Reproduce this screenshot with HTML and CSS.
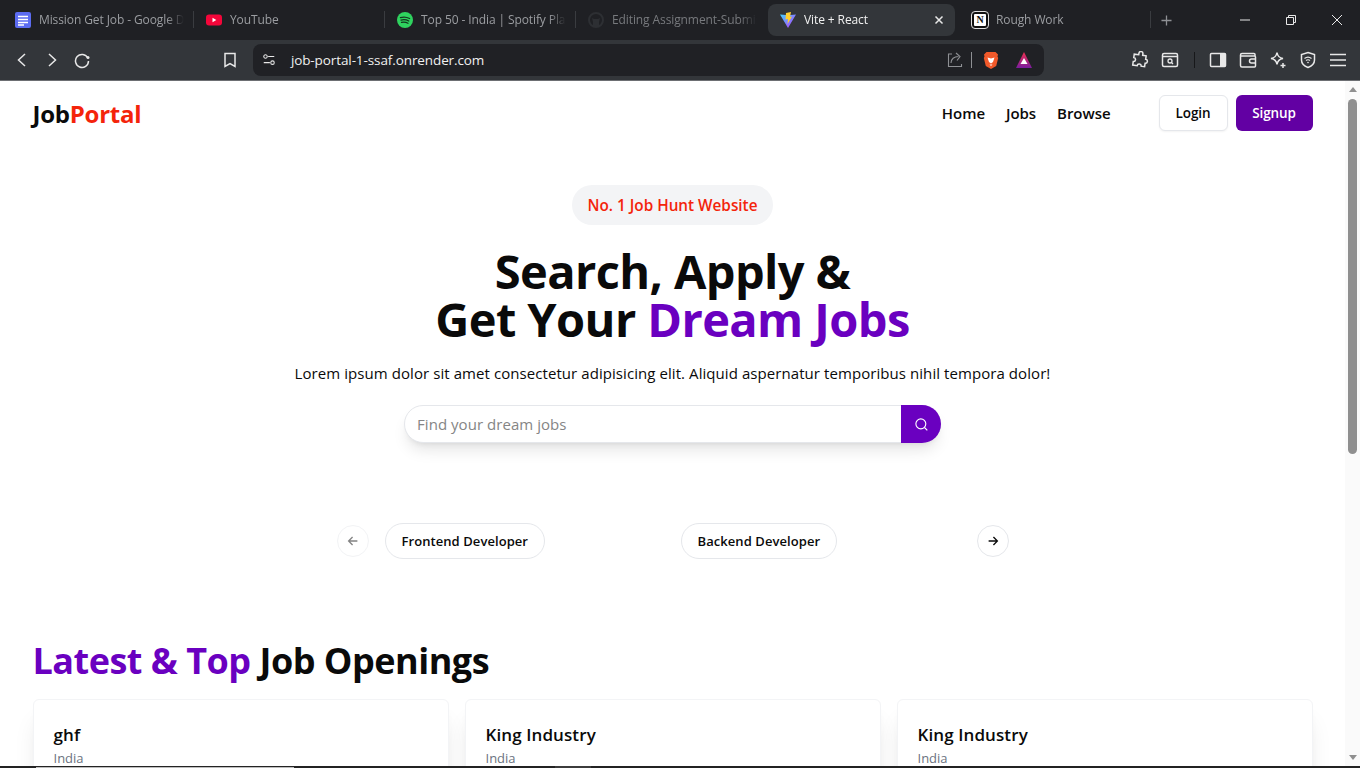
FILE: index.html
```html
<!DOCTYPE html>
<html lang="en">
<head>
<meta charset="UTF-8">
<title>Vite + React</title>
<link rel="stylesheet" href="styles.css">
</head>
<body>

<!-- browser tabs -->
<div class="tabstrip">
    <div class="tab">
        <svg class="favicon" viewBox="0 0 16 16"><rect width="16" height="16" rx="2" fill="#5c6cf2"/><path d="M3 4.500h10M3 7.500h10M3 10.500h10M3 13h6" stroke="#fff" stroke-width="1.500"/></svg>
        <span class="tab-title">Mission Get Job - Google Docs</span>
    </div>
    <div class="tab">
        <svg class="favicon" viewBox="0 0 16 16"><rect y="2.500" width="16" height="11" rx="3" fill="#f4063a"/><path d="M6.500 5.800v4.400L10.300 8z" fill="#fff"/></svg>
        <span class="tab-title">YouTube</span>
    </div>
    <div class="tab">
        <svg class="favicon" viewBox="0 0 16 16"><circle cx="8" cy="8" r="8" fill="#2fd35f"/><path d="M3.400 5.600c3-.9 6.400-.6 9.200.9M4 8.100c2.600-.7 5.400-.4 7.800.9M4.500 10.400c2.200-.5 4.500-.3 6.500.8" fill="none" stroke="#14371f" stroke-width="1.300" stroke-linecap="round"/></svg>
        <span class="tab-title">Top 50 - India | Spotify Playlist</span>
    </div>
    <div class="tab no-sep">
        <svg class="favicon" viewBox="0 0 16 16"><circle cx="8" cy="8" r="7" fill="none" stroke="#2d2f33" stroke-width="2"/><path d="M5 14V10L4 6l2 1h4l2-1-1 4v4z" fill="#2d2f33"/></svg>
        <span class="tab-title dim">Editing Assignment-Submission</span>
    </div>
    <div class="tab active">
        <svg class="favicon" viewBox="0 0 16 16"><defs><linearGradient id="viteBg" x1="0" y1="0" x2="1" y2="1"><stop offset="0" stop-color="#41d1ff"/><stop offset="1" stop-color="#bd34fe"/></linearGradient></defs><path d="M0 2.500l6 .6 2 .2 8-.8L8 16z" fill="url(#viteBg)"/><path d="M6 1l5-1-1 5 2-.5L7.500 12 8 7 5.500 7.500z" fill="#ffcf2e"/></svg>
        <span class="tab-title">Vite + React</span>
        <svg class="tab-close" viewBox="0 0 10 10"><path d="M1.500 1.500l7 7M8.500 1.500l-7 7" stroke="#e8e8e8" stroke-width="1.500"/></svg>
    </div>
    <div class="tab">
        <span class="notion-icon">N</span>
        <span class="tab-title">Rough Work</span>
    </div>
    <svg class="new-tab" viewBox="0 0 12 12"><path d="M6 .5v11M.5 6h11" stroke="#8f9195" stroke-width="1.400"/></svg>
    <div class="window-controls">
        <svg viewBox="0 0 12 12"><path d="M1 6h10" stroke="#e8e8e8"/></svg>
        <svg viewBox="0 0 12 12"><path d="M1.500 3.500h7v7h-7zM3.500 3.500v-2h7v7h-2" fill="none" stroke="#e8e8e8"/></svg>
        <svg viewBox="0 0 12 12"><path d="M1 1l10 10M11 1L1 11" stroke="#e8e8e8"/></svg>
    </div>
</div>

<!-- address bar row -->
<div class="toolbar">
    <div class="tool"><svg viewBox="0 0 18 18"><path d="M12 3L5.500 9l6.500 6" /></svg></div>
    <div class="tool"><svg viewBox="0 0 18 18"><path d="M6 3l6.500 6L6 15" /></svg></div>
    <div class="tool"><svg viewBox="0 0 18 18"><path d="M14.800 7A6.500 6.500 0 1 0 15.500 10" /><circle cx="15" cy="6.500" r="1.500" fill="#e8e8e8" stroke="none"/></svg></div>
    <div class="tool bookmark"><svg viewBox="0 0 18 18"><path d="M4 2.500h10v13L9 12.500l-5 3z" /></svg></div>
    <div class="urlbar">
        <svg class="url-tune" viewBox="0 0 16 16"><circle cx="4" cy="4" r="2"/><path d="M7 4h7M2 11h7"/><circle cx="12" cy="11" r="2"/></svg>
        <span class="url-text">job-portal-1-ssaf.onrender.com</span>
        <svg class="url-share" viewBox="0 0 18 18"><path d="M6 3H2.500v12.500h13V13M5 12c0-4 3-6.500 7.500-6.500M10 2l4 3.500-3 4" /></svg>
        <span class="url-sep"></span>
        <svg class="url-brave" viewBox="0 0 16 18"><path d="M3.500 1h9L15 3.500l-.5 2 .7 1.500-2 8L8 18l-5.200-3-2-8 .7-1.500L1 3.500z" fill="#f1592a"/><path d="M4.500 6.500L8 7.500l3.500-1L10 11l-2 1.500L6 11z" fill="#fff"/><path d="M6.500 13.500h3L8 15z" fill="#fff"/></svg>
        <svg class="url-rewards" viewBox="0 0 16 16"><defs><linearGradient id="batBg" x1="0" y1="0" x2="0" y2="1"><stop offset="0" stop-color="#f0304f"/><stop offset="1" stop-color="#7a1c9e"/></linearGradient></defs><path d="M8 0l8 16H0z" fill="url(#batBg)"/><path d="M8 6l3.500 6h-7z" fill="#fff"/></svg>
    </div>
    <div class="tool-group">
        <div class="tool"><svg viewBox="0 0 18 18"><path d="M7 2.500a2 2 0 0 1 4 0v1.500h3.500v3.500a2 2 0 0 1 0 4v3.500H11a2 2 0 0 0-4 0H2.500V11.500a2 2 0 0 0 0-4V4H7z" transform="rotate(8 9 9)"/></svg></div>
        <div class="tool"><svg viewBox="0 0 18 18"><rect x="1.500" y="2.500" width="15" height="13" rx="1.500"/><path d="M1.500 5.500h15"/><circle cx="9" cy="10" r="2" stroke-width="1.300"/><path d="M10.500 11.500l1.500 1.500" stroke-width="1.300"/></svg></div>
        <span class="tool-sep"></span>
        <div class="tool"><svg viewBox="0 0 18 18"><rect x="1.500" y="2.500" width="15" height="13" rx="1"/><rect x="11" y="2.500" width="5.500" height="13" fill="#e8e8e8" stroke="none"/></svg></div>
        <div class="tool"><svg viewBox="0 0 18 18"><path d="M16 5V3.500a1 1 0 0 0-1-1H3a1.500 1.500 0 0 0-1.500 1.500v10.500a1.500 1.500 0 0 0 1.500 1.500h12.500a1 1 0 0 0 1-1V6a1 1 0 0 0-1-1H2"/><path d="M16.500 8h-4a2 2 0 0 0 0 4h4"/></svg></div>
        <div class="tool"><svg viewBox="0 0 18 18"><path d="M8 1.500c.6 3.800 2.200 5.400 6 6-3.800.6-5.400 2.200-6 6-.6-3.800-2.200-5.400-6-6 3.800-.6 5.400-2.200 6-6zM14 12v5M11.500 14.500h5"/></svg></div>
        <div class="tool"><svg viewBox="0 0 18 18"><path d="M9 1.500l6.500 2v5.500c0 3.500-2.700 6-6.500 7.500-3.800-1.500-6.500-4-6.500-7.500V3.500z"/><path d="M5.500 7.500c2-1.600 5-1.600 7 0M7 9.500c1.200-.9 2.800-.9 4 0" stroke-width="1.200"/><circle cx="9" cy="11.500" r=".8" fill="#e8e8e8" stroke="none"/></svg></div>
        <div class="tool"><svg viewBox="0 0 18 18"><path d="M1 3.500h16M1 9h16M1 14.500h16"/></svg></div>
    </div>
</div>

<div class="viewport">
    <div class="page">
        <nav class="navbar">
            <h2 class="logo">Job<span class="red">Portal</span></h2>
            <div class="nav-right">
                <ul class="nav-links">
                    <li>Home</li>
                    <li>Jobs</li>
                    <li>Browse</li>
                </ul>
                <div class="nav-buttons">
                    <button class="btn btn-outline">Login</button>
                    <button class="btn btn-purple">Signup</button>
                </div>
            </div>
        </nav>

        <section class="hero">
            <span class="badge">No. 1 Job Hunt Website</span>
            <h1>Search, Apply &amp;<br>Get Your <span class="purple">Dream Jobs</span></h1>
            <p>Lorem ipsum dolor sit amet consectetur adipisicing elit. Aliquid aspernatur temporibus nihil tempora dolor!</p>
            <div class="search">
                <input placeholder="Find your dream jobs">
                <button class="search-btn">
                    <svg viewBox="0 0 16 16"><circle cx="7.300" cy="7.300" r="5.300"/><path d="M11.200 11.200l3 3"/></svg>
                </button>
            </div>
        </section>

        <section class="carousel">
            <button class="arrow arrow-off"><svg viewBox="0 0 16 16"><path d="M13 8H3M7.500 3.500L3 8l4.500 4.500"/></svg></button>
            <div class="carousel-items">
                <div class="chip-slot"><button class="chip">Frontend Developer</button></div>
                <div class="chip-slot"><button class="chip">Backend Developer</button></div>
            </div>
            <button class="arrow"><svg viewBox="0 0 16 16"><path d="M3 8h10M8.500 3.500L13 8l-4.500 4.500"/></svg></button>
        </section>

        <section class="latest">
            <h2><span class="purple">Latest &amp; Top</span> Job Openings</h2>
            <div class="job-grid">
                <div class="job-card">
                    <h3>ghf</h3>
                    <p>India</p>
                </div>
                <div class="job-card">
                    <h3>King Industry</h3>
                    <p>India</p>
                </div>
                <div class="job-card">
                    <h3>King Industry</h3>
                    <p>India</p>
                </div>
            </div>
        </section>
    </div>

    <div class="scrollbar">
        <span class="scroll-up"></span>
        <span class="scroll-thumb"></span>
        <span class="scroll-down"></span>
    </div>
</div>

<!-- sliver of the taskbar -->
<div class="taskbar">
    <span class="task-search"></span>
    <span class="task-item"></span>
</div>

</body>
</html>
```

FILE: styles.css
```css
* { box-sizing: border-box; }

html, body {
    margin: 0;
    height: 768px;
    overflow: hidden;
}
body {
    font-family: "Open Sans", "Noto Sans", sans-serif;
    background: #fff;
    color: #0a0a0a;
    display: flex;
    flex-direction: column;
}

/* browser tabs */
.tabstrip {
    height: 40px;
    background: #1f2024;
    display: flex;
    align-items: center;
    padding-left: 1px;
    flex-shrink: 0;
}
.tab {
    width: 191px;
    height: 32px;
    padding: 0 8px 0 14px;
    display: flex;
    align-items: center;
    gap: 8px;
    position: relative;
    font-size: 12px;
    letter-spacing: -0.1px;
    color: #9b9da1;
}
.tab::after {
    content: "";
    position: absolute;
    right: -2px;
    top: 7px;
    height: 17px;
    width: 1px;
    background: #3a3c40;
}
.tab.no-sep::after, .tab.active::after { display: none; }
.tab.active {
    width: 187px;
    margin: 0 3px 0 3px;
    padding: 0 11px 0 12px;
    background: #33363a;
    border-radius: 8px;
    color: #f1f1f1;
}
.favicon { width: 16px; height: 16px; flex-shrink: 0; }
.tab-title {
    flex: 1;
    padding-bottom: 2px;
    white-space: nowrap;
    overflow: hidden;
    -webkit-mask-image: linear-gradient(to right, #000 88%, transparent);
    mask-image: linear-gradient(to right, #000 88%, transparent);
}
.tab-title.dim { color: #77797d; }
.tab-close { width: 10px; height: 10px; flex-shrink: 0; }
.notion-icon {
    width: 16px;
    height: 16px;
    flex-shrink: 0;
    background: #fff;
    border: 2px solid #111;
    outline: 1px solid #ddd;
    border-radius: 3px;
    color: #111;
    font: bold 10px/12px "Liberation Serif", serif;
    text-align: center;
}
.new-tab { width: 11px; height: 11px; margin-left: 12px; }
.window-controls {
    margin-left: auto;
    display: flex;
    gap: 34px;
    padding-right: 17px;
}
.window-controls svg { width: 12px; height: 12px; display: block; }

/* address bar row */
.toolbar {
    height: 41px;
    background: #33363a;
    border-bottom: 1px solid #6d6f73;
    display: flex;
    align-items: center;
    padding: 0 7px 1px;
    flex-shrink: 0;
}
.tool {
    width: 30px;
    height: 30px;
    display: flex;
    align-items: center;
    justify-content: center;
}
.tool svg { width: 18px; height: 18px; }
.tool svg, .url-tune, .url-share {
    fill: none;
    stroke: #e8e8e8;
    stroke-width: 1.500;
}
.bookmark { margin-left: 118px; }
.urlbar {
    width: 792px;
    height: 32px;
    margin-left: 8px;
    background: #202125;
    border-radius: 8px;
    display: flex;
    align-items: center;
    padding-left: 9px;
}
.url-tune { width: 14px; height: 14px; stroke-width: 1.200; }
.url-text {
    margin-left: 15px;
    font-size: 13.500px;
    letter-spacing: -0.1px;
    color: #f0f0f0;
}
.url-share {
    width: 18px;
    height: 18px;
    margin-left: auto;
    stroke: #8e9094;
    stroke-width: 1.100;
}
.url-sep { width: 1px; height: 16px; background: #8e9094; margin: 0 11px 0 7px; }
.url-brave { width: 16px; height: 18px; }
.url-rewards { width: 16px; height: 16px; margin: 0 12px 0 17px; }
.tool-group {
    display: flex;
    align-items: center;
    margin-left: 81px;
}
.tool-sep { width: 1px; height: 16px; background: #17181a; margin: 0 8px 0 9px; }

/* page area */
.viewport {
    flex: 1;
    min-height: 0;
    display: flex;
}
.page {
    flex: 1;
    min-width: 0;
    overflow: hidden;
}
.red { color: #f4240b; }
.purple { color: #6a00c0; }

.navbar {
    width: 1280px;
    height: 64px;
    margin: 0 auto;
    display: flex;
    align-items: center;
    justify-content: space-between;
}
.logo {
    margin: 0;
    font-size: 24px;
    font-weight: 700;
    letter-spacing: -0.25px;
}
.nav-right { display: flex; align-items: center; gap: 48px; }
.nav-links {
    display: flex;
    gap: 21px;
    list-style: none;
    margin: 0;
    padding: 0;
    font-size: 15px;
    font-weight: 600;
    letter-spacing: -0.05px;
}
.nav-buttons { display: flex; gap: 8px; }
.btn {
    height: 36px;
    border-radius: 6px;
    font-family: inherit;
    font-size: 13.500px;
    font-weight: 600;
    letter-spacing: -0.1px;
}
.btn-outline {
    width: 69px;
    background: #fff;
    border: 1px solid #e5e7eb;
    color: #0a0a0a;
    box-shadow: 0 1px 2px rgba(0,0,0,.05);
}
.btn-purple {
    width: 77px;
    background: #6200a3;
    border: 0;
    color: #fff;
}

.hero {
    display: flex;
    flex-direction: column;
    align-items: center;
    padding-top: 40px;
}
.badge {
    height: 40px;
    width: 201px;
    border-radius: 20px;
    background: #f3f4f6;
    color: #f4240b;
    font-size: 15.300px;
    font-weight: 600;
    line-height: 41px;
    text-align: center;
}
.hero h1 {
    margin: 22px 0 0;
    font-size: 47px;
    line-height: 48px;
    font-weight: 700;
    letter-spacing: -0.6px;
    text-align: center;
}
.hero p {
    margin: 18px 0 0;
    font-size: 15px;
    line-height: 24px;
    letter-spacing: 0.07px;
}
.search {
    width: 537px;
    height: 38px;
    margin-top: 20px;
    display: flex;
    border: 1px solid #e5e7eb;
    border-radius: 19px;
    box-shadow: 0 10px 15px -3px rgba(0,0,0,.1), 0 4px 6px -4px rgba(0,0,0,.1);
    background: #fff;
}
.search input {
    flex: 1;
    min-width: 0;
    border: 0;
    outline: 0;
    padding-left: 12px;
    background: transparent;
    font-family: inherit;
    font-size: 15px;
    letter-spacing: 0.05px;
}
.search input::placeholder { color: #858585; }
.search-btn {
    width: 40px;
    margin: -1px -1px -1px 0;
    border: 0;
    border-radius: 0 19px 19px 0;
    background: #6a00c0;
    display: flex;
    align-items: center;
    justify-content: center;
    padding: 0;
}
.search-btn svg {
    width: 15px;
    height: 15px;
    fill: none;
    stroke: #fff;
    stroke-width: 1.200;
}

.carousel {
    width: 672px;
    margin: 80px auto 0;
    display: flex;
    align-items: center;
}
.arrow {
    width: 32px;
    height: 32px;
    flex-shrink: 0;
    padding: 0;
    border-radius: 50%;
    border: 1px solid #e5e7eb;
    background: #fff;
    display: flex;
    align-items: center;
    justify-content: center;
}
.arrow svg {
    width: 14px;
    height: 14px;
    fill: none;
    stroke: #0a0a0a;
    stroke-width: 1.500;
}
.arrow-off { opacity: .5; }
.carousel-items { flex: 1; display: flex; padding-left: 16px; }
.chip-slot { width: 296px; }
.chip {
    height: 36px;
    padding: 0 16px;
    border: 1px solid #e5e7eb;
    border-radius: 18px;
    background: #fff;
    font-family: inherit;
    font-size: 13px;
    font-weight: 600;
    letter-spacing: 0.07px;
    color: #0a0a0a;
}

.latest {
    width: 1280px;
    margin: 82px auto 0;
}
.latest h2 {
    margin: 0;
    font-size: 36px;
    line-height: 40px;
    font-weight: 700;
    letter-spacing: -0.5px;
}
.job-grid {
    display: grid;
    grid-template-columns: repeat(3, 1fr);
    gap: 16px;
    margin-top: 18px;
}
.job-card {
    height: 200px;
    padding: 21px 20px 20px;
    border: 1px solid #f3f4f6;
    border-radius: 6px;
    background: #fff;
    box-shadow: 0 20px 25px -5px rgba(0,0,0,.1), 0 8px 10px -6px rgba(0,0,0,.1);
}
.job-card h3 {
    margin: 0;
    font-size: 17px;
    line-height: 28px;
    font-weight: 600;
    letter-spacing: 0.1px;
}
.job-card p {
    margin: -1px 0 0;
    font-size: 13px;
    line-height: 20px;
    color: #6b7280;
}

/* scrollbar */
.scrollbar {
    width: 15px;
    flex-shrink: 0;
    background: #fafafa;
    display: flex;
    flex-direction: column;
    align-items: center;
}
.scroll-up {
    margin-top: 6px;
    border: 4px solid transparent;
    border-top: 0;
    border-bottom: 5px solid #8f8f8f;
}
.scroll-thumb {
    width: 9px;
    height: 355px;
    margin-top: 7px;
    border-radius: 5px;
    background: #8f8f8f;
}
.scroll-down {
    margin-top: auto;
    margin-bottom: 6px;
    border: 4px solid transparent;
    border-bottom: 0;
    border-top: 5px solid #8f8f8f;
}

.taskbar {
    height: 2px;
    background: #232323;
    flex-shrink: 0;
    display: flex;
}
.task-search {
    width: 258px;
    height: 1px;
    margin: 1px 0 0 36px;
    background: #bdbdbd;
}
.task-item {
    width: 36px;
    margin-left: 261px;
    background: #3c3c3c;
}
```
